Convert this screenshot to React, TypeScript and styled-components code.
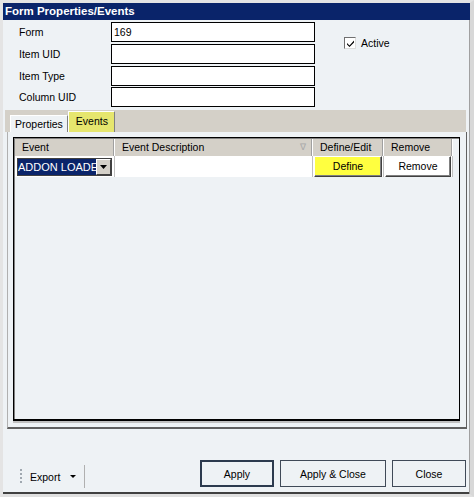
import React from "react";
import styled, { createGlobalStyle } from "styled-components";

const Global = createGlobalStyle`
  html, body { margin: 0; padding: 0; background: #eef2f5; }
  body { font-family: "Liberation Sans", Arial, sans-serif; font-size: 10.5px; color: #000; }
  * { box-sizing: border-box; }
`;

const Window = styled.div`
  width: 474px;
  height: 497px;
  display: flex;
  flex-direction: column;
  background: #eef2f5;
  border-top: 3px solid #e4e4e4;
  border-left: 3px solid #e4e4e4;
  border-right: 4px solid #d8d8d8;
  border-bottom: 3px solid #e0e0e0;
  box-shadow: inset -1px 0 0 #a0a0a0, inset 0 -2px 0 #404040;
`;

const TitleBar = styled.div`
  height: 17px;
  background: #0a246a;
  color: #fff;
  font-weight: bold;
  font-size: 11.5px;
  line-height: 17px;
  padding-left: 2px;
`;

const Body = styled.div`
  flex: 1;
  display: flex;
  flex-direction: column;
`;

const Header = styled.div`
  display: flex;
  padding: 2px 0 0 16px;
  height: 88px;
`;

const Fields = styled.div`
  display: grid;
  grid-template-columns: 92px 204px;
  row-gap: 1px;
`;

const Label = styled.div`
  height: 20px;
  line-height: 20px;
`;

const Input = styled.div`
  height: 20px;
  border: 1px solid #000;
  background: #fff;
  padding-left: 2px;
  line-height: 18px;
`;

const CheckRow = styled.label`
  display: flex;
  align-items: center;
  gap: 5px;
  margin: 14px 0 0 29px;
  height: 14px;
`;

const Check = styled.span`
  width: 12px;
  height: 12px;
  border: 1px solid #dcdcdc;
  border-top-color: #707070;
  border-left-color: #707070;
  background: #fff;
  display: flex;
  align-items: center;
  justify-content: center;
`;

const TabStrip = styled.div`
  margin: 2px 4px 0 2px;
  height: 22px;
  background: #d4d0c8;
  display: flex;
  align-items: flex-end;
  padding-left: 5px;
`;

const Tab = styled.div<{ $active?: boolean }>`
  height: ${(p) => (p.$active ? 21 : 17)}px;
  padding: ${(p) => (p.$active ? "0 6px 0 7px" : "0 4px 0 4px")};
  line-height: ${(p) => (p.$active ? 18 : 16)}px;
  background: ${(p) => (p.$active ? "#e6e66e" : "#eef2f5")};
  border-left: 1px solid #fff;
  border-right: 1px solid #808080;
  border-top: 1px solid #fff;
`;

const Panel = styled.div`
  margin: 0 3px 0 4px;
  height: 297px;
  padding: 5px 6px 6px 5px;
  border-left: 1px solid #b0b0b0;
  border-right: 1px solid #606060;
  border-bottom: 2px solid #606060;
  background: #eef2f5;
  display: flex;
`;

const Grid = styled.div`
  flex: 1;
  border: 1px solid #000;
  border-bottom-width: 2px;
  background: #eef2f5;
  box-shadow: 0 2px 0 0 #c0c0c0, inset 1px 1px 0 #808080;
  display: flex;
  flex-direction: column;
  padding: 1px 0 0 1px;
`;

const Row = styled.div`
  display: grid;
  grid-template-columns: 100px 198px 71px 69px;
`;

const HeadCell = styled.div`
  height: 17px;
  line-height: 16px;
  background: #d4d0c8;
  border-right: 1px solid #fff;
  box-shadow: inset -1px 0 0 #a0a0a0;
  padding: 0 6px 0 7px;
  display: flex;
  justify-content: space-between;
`;

const SortMark = styled.span`
  color: #a8a8a8;
  font-size: 9px;
`;

const Cell = styled.div`
  height: 21px;
  background: #fff;
  border-right: 1px solid #c0c0c0;
  display: flex;
  align-items: center;
`;

const Combo = styled.div`
  display: flex;
  align-items: center;
  margin-left: 2px;
  height: 18px;
  border: 1px solid #404040;
`;

const Selected = styled.span`
  background: #0a246a;
  color: #fff;
  width: 78px;
  height: 16px;
  line-height: 16px;
  font-size: 11px;
  overflow: hidden;
  white-space: nowrap;
`;

const DropButton = styled.span`
  width: 15px;
  height: 16px;
  background: #d4d0c8;
  border: 1px solid #fff;
  border-right-color: #404040;
  border-bottom-color: #404040;
  display: flex;
  align-items: center;
  justify-content: center;
`;

const CellButton = styled.div<{ $bg: string }>`
  flex: 1;
  height: 21px;
  margin: 0 1px;
  background: ${(p) => p.$bg};
  border: 1px solid #404040;
  border-top-color: #fff;
  border-left-color: #fff;
  box-shadow: inset -1px -1px 0 #808080;
  text-align: center;
  line-height: 19px;
`;

const Footer = styled.div`
  flex: 1;
  display: flex;
  align-items: flex-end;
  padding: 0 4px 6px 15px;
`;

const ExportBox = styled.div`
  display: flex;
  align-items: center;
  height: 23px;
  width: 67px;
  border-right: 1px solid #b0b0b0;
`;

const Grip = styled.span`
  width: 2px;
  height: 15px;
  margin: 0 8px 0 2px;
  background: repeating-linear-gradient(to bottom, #a0a8b0 0 2px, transparent 2px 4px);
`;

const Caret = styled.span`
  margin-left: 10px;
  width: 0;
  height: 0;
  border-left: 3px solid transparent;
  border-right: 3px solid transparent;
  border-top: 3px solid #000;
`;

const Buttons = styled.div`
  margin-left: auto;
  display: flex;
  gap: 6px;
  margin-bottom: 1px;
`;

const Button = styled.button<{ $w: number; $default?: boolean }>`
  width: ${(p) => p.$w}px;
  height: 27px;
  font-family: inherit;
  font-size: 10.5px;
  background: #eef2f5;
  border: ${(p) => (p.$default ? "2px solid #2c3a4e" : "1px solid #404a58")};
  padding: 0;
  color: #000;
`;

export default function App() {
  return (
    <>
      <Global />
      <Window>
        <TitleBar>Form Properties/Events</TitleBar>
        <Body>
          <Header>
            <Fields>
              <Label>Form</Label>
              <Input>169</Input>
              <Label>Item UID</Label>
              <Input />
              <Label>Item Type</Label>
              <Input />
              <Label>Column UID</Label>
              <Input />
            </Fields>
            <CheckRow>
              <Check>
                <svg width="9" height="9" viewBox="0 0 9 9">
                  <path d="M1 4 L3.5 6.5 L8 1.5 L8 3.5 L3.5 8 L1 5.5 Z" fill="#000" />
                </svg>
              </Check>
              Active
            </CheckRow>
          </Header>
          <TabStrip>
            <Tab>Properties</Tab>
            <Tab $active>Events</Tab>
          </TabStrip>
          <Panel>
            <Grid>
              <Row>
                <HeadCell>Event</HeadCell>
                <HeadCell>
                  Event Description
                  <SortMark>∇</SortMark>
                </HeadCell>
                <HeadCell>Define/Edit</HeadCell>
                <HeadCell>Remove</HeadCell>
              </Row>
              <Row>
                <Cell>
                  <Combo>
                    <Selected>ADDON LOADE</Selected>
                    <DropButton>
                      <svg width="7" height="4" viewBox="0 0 7 4">
                        <path d="M0 0 H7 L3.5 4 Z" fill="#000" />
                      </svg>
                    </DropButton>
                  </Combo>
                </Cell>
                <Cell />
                <Cell>
                  <CellButton $bg="#ffff40">Define</CellButton>
                </Cell>
                <Cell>
                  <CellButton $bg="#fff">Remove</CellButton>
                </Cell>
              </Row>
            </Grid>
          </Panel>
          <Footer>
            <ExportBox>
              <Grip />
              Export
              <Caret />
            </ExportBox>
            <Buttons>
              <Button $w={74} $default>Apply</Button>
              <Button $w={106}>Apply &amp; Close</Button>
              <Button $w={74}>Close</Button>
            </Buttons>
          </Footer>
        </Body>
      </Window>
    </>
  );
}
